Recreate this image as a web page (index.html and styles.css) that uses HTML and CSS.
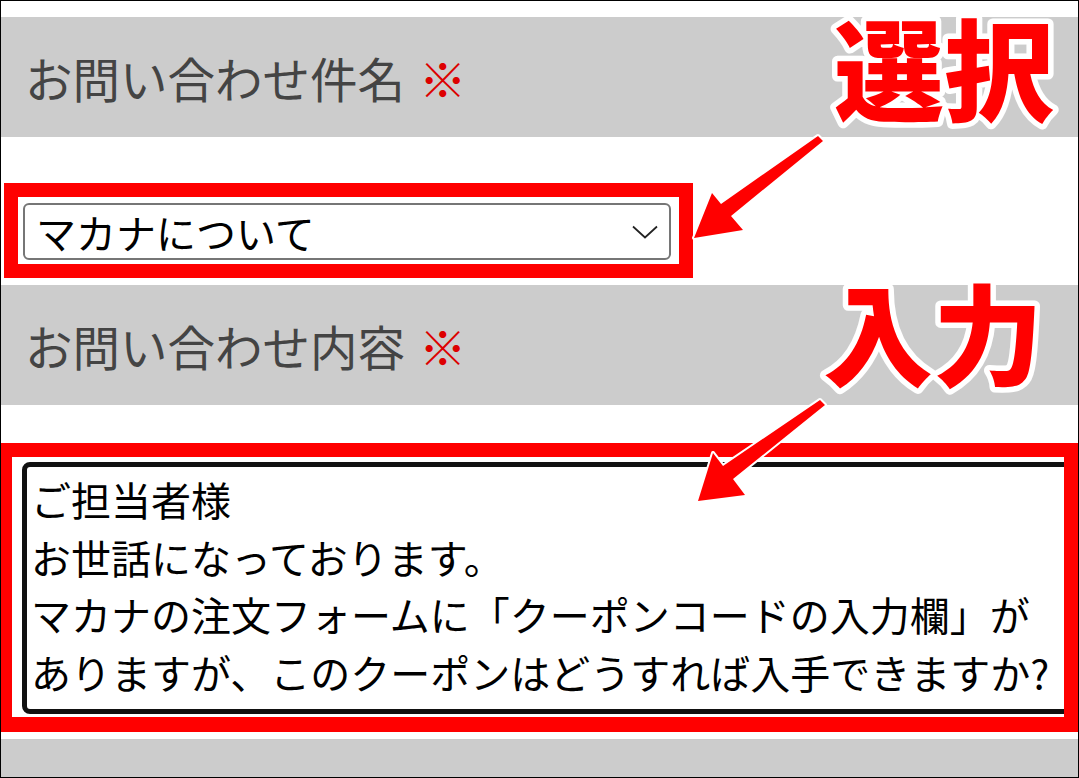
FILE: index.html
```html
<!DOCTYPE html>
<html lang="ja">
<head>
<meta charset="utf-8">
<title>お問い合わせ</title>
<link rel="stylesheet" href="styles.css">
</head>
<body>
<div class="frame">
  <div class="band band-first">
    <span class="label">お問い合わせ件名</span><span class="req">※</span>
  </div>
  <div class="redbox redbox-select">
    <div class="select" role="combobox" aria-expanded="false">
      <span class="select-text">マカナについて</span>
      <svg class="chev" width="26" height="14" viewBox="0 0 26 14"><path d="M1 1.5 L13 12.5 L25 1.5" fill="none" stroke="#222" stroke-width="1.7"/></svg>
    </div>
  </div>
  <div class="band band-second">
    <span class="label">お問い合わせ内容</span><span class="req">※</span>
  </div>
  <div class="redbox redbox-area">
    <textarea class="area" wrap="off">ご担当者様
お世話になっております。
マカナの注文フォームに「クーポンコードの入力欄」が
ありますが、このクーポンはどうすれば入手できますか?</textarea>
  </div>
  <div class="band band-last"></div>

  <svg class="overlay" width="1079" height="778" viewBox="0 0 1079 778">
    <g class="arrow">
      <polygon points="694,238 712,193 721,204 818,136 823,141 731,216 743,230"/>
      <polygon points="698,501 713,453 723,466 820,400 825,405 733,479 745,495"/>
    </g>
    <text class="note" x="834" y="113">選択</text>
    <text class="note" x="823" y="378">入力</text>
  </svg>
</div>
</body>
</html>
```
FILE: styles.css
```css
html, body {
  margin: 0;
  padding: 0;
  background: #fff;
}
body {
  font-family: "Noto Sans CJK JP", "Noto Sans", sans-serif;
}
.frame {
  position: relative;
  width: 1079px;
  height: 778px;
  box-sizing: border-box;
  border: 1px solid #000;
  overflow: hidden;
  padding-top: 16px;
  display: flex;
  flex-direction: column;
}
.band {
  background: #cccccc;
  height: 120px;
  flex: none;
  display: flex;
  align-items: center;
  padding-left: 24px;
  padding-top: 2px;
  box-sizing: border-box;
  font-size: 47.5px;
  color: #444;
  line-height: 1;
}
.req {
  color: #dd0000;
  margin-left: 14px;
}
.band-second {
  margin-top: 7px;
}
.band-last {
  margin-top: 7px;
  flex: 1;
  height: auto;
}
.redbox {
  border: 14px solid #ff0000;
  box-sizing: border-box;
  flex: none;
  background: #fff;
}
.redbox-select {
  margin-top: 46px;
  margin-left: 3px;
  width: 689px;
  height: 95px;
  padding: 6px 8px 4px 5px;
}
.select {
  height: 57px;
  box-sizing: border-box;
  border: 2px solid #767676;
  border-radius: 6px;
  display: flex;
  align-items: center;
  justify-content: space-between;
  padding: 0 11px 0 11px;
  font-size: 40px;
  color: #000;
}
.chev {
  display: block;
}
.redbox-area {
  margin-top: 38px;
  height: 289px;
  border-left-width: 11px;
  border-bottom-width: 15px;
  padding: 5px 0 0 10px;
  overflow: hidden;
}
.area {
  display: block;
  width: 1060px;
  height: 252px;
  box-sizing: border-box;
  border: 5px solid #111;
  border-radius: 8px;
  padding: 4px 4px;
  margin: 0;
  resize: none;
  white-space: pre;
  overflow: hidden;
  font-family: "Noto Sans CJK JP", "Noto Sans", sans-serif;
  font-size: 40px;
  line-height: 57.7px;
  color: #000;
  background: #fff;
  outline: none;
}
.overlay {
  position: absolute;
  left: -1px;
  top: -1px;
  pointer-events: none;
}
.arrow polygon {
  fill: #ff0000;
  stroke: #fff;
  stroke-width: 4;
  stroke-linejoin: round;
  paint-order: stroke;
}
.note {
  font-family: "Noto Sans CJK JP", sans-serif;
  font-size: 110px;
  font-weight: 900;
  fill: #ff0000;
  stroke: #fff;
  stroke-width: 11px;
  stroke-linejoin: round;
  paint-order: stroke;
}
```
